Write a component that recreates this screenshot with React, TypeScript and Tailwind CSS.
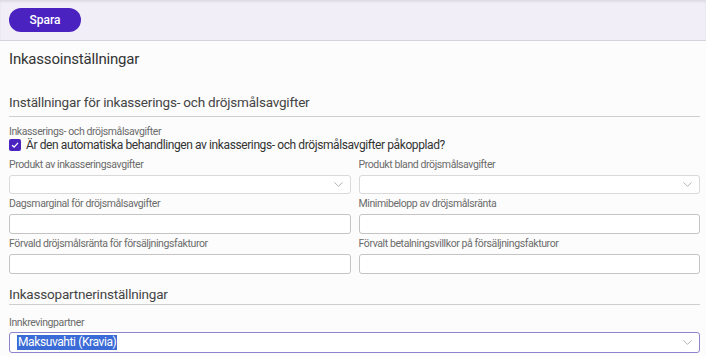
import { ChevronDown } from "lucide-react";

const font = { fontFamily: "Roboto, 'Noto Sans', sans-serif" };

function Label({ children }: { children: React.ReactNode }) {
  return (
    <p className="text-[10.5px] leading-[12px] tracking-[-0.4px] text-[#6b6b6b]">{children}</p>
  );
}

function TextField({ label }: { label: string }) {
  return (
    <div className="flex flex-col gap-[4px]">
      <Label>{label}</Label>
      <div className="h-[20px] rounded-[3px] border border-[#c4c4c4] bg-white" />
    </div>
  );
}

function SelectField({ label }: { label: string }) {
  return (
    <div className="flex flex-col gap-[4px]">
      <Label>{label}</Label>
      <div className="flex h-[19px] items-center justify-end rounded-[3px] border border-[#d9d9d9] bg-white pr-[4px]">
        <ChevronDown className="h-[15px] w-[15px] text-[#9a9a9a]" strokeWidth={1.2} />
      </div>
    </div>
  );
}

export default function App() {
  return (
    <div className="h-[356px] w-[706px] overflow-hidden bg-[#fcfcfc] text-[#333]" style={font}>
      <div className="flex h-[41px] items-center border-b border-[#d6d3dc] bg-[#f2eef8] px-[9px] shadow-[inset_0_2px_2px_rgba(0,0,0,0.08)]">
        <button
          type="button"
          className="h-[24px] w-[72px] rounded-full bg-[#4a22c0] text-[12px] font-medium text-white"
        >
          Spara
        </button>
      </div>

      <div className="pl-[9px] pr-[6px]">
        <h1 className="pt-[8px] text-[15px] leading-[20px] tracking-[-0.2px] text-[#333]">
          Inkassoinställningar
        </h1>

        <h2 className="mt-[24px] border-b border-[#cfcfcf] pb-[5px] text-[13.5px] leading-[18px] tracking-[-0.2px] text-[#444]">
          Inställningar för inkasserings- och dröjsmålsavgifter
        </h2>

        <div className="mt-[9px]">
          <Label>Inkasserings- och dröjsmålsavgifter</Label>
          <label className="flex items-center gap-[5px] text-[12px] leading-[14px] tracking-[-0.4px] text-[#333]">
            <span className="flex h-[12px] w-[12px] items-center justify-center rounded-[2px] bg-[#4a22c0]">
              <svg viewBox="0 0 12 12" className="h-[10px] w-[10px]" fill="none" stroke="white" strokeWidth="1.6">
                <path d="M2.5 6.2 5 8.5 9.6 3.4" />
              </svg>
            </span>
            Är den automatiska behandlingen av inkasserings- och dröjsmålsavgifter påkopplad?
          </label>
        </div>

        <div className="mt-[7px] grid grid-cols-2 gap-x-[8px] gap-y-[4px]">
          <SelectField label="Produkt av inkasseringsavgifter" />
          <SelectField label="Produkt bland dröjsmålsavgifter" />
          <TextField label="Dagsmarginal för dröjsmålsavgifter" />
          <TextField label="Minimibelopp av dröjsmålsränta" />
          <TextField label="Förvald dröjsmålsränta för försäljningsfakturor" />
          <TextField label="Förvalt betalningsvillkor på försäljningsfakturor" />
        </div>

        <h2 className="mt-[11px] border-b border-[#cfcfcf] pb-[1px] text-[13.5px] leading-[18px] tracking-[-0.2px] text-[#444]">
          Inkassopartnerinställningar
        </h2>

        <div className="mt-[12px] flex flex-col gap-[3px]">
          <Label>Innkrevingpartner</Label>
          <div className="flex h-[21px] items-center justify-between rounded-[3px] border border-[#8f84cc] bg-white pl-[7px] pr-[4px]">
            <span className="bg-[#3a6bd6] px-[1px] text-[12px] leading-[15px] tracking-[-0.4px] text-white">
              Maksuvahti (Kravia)
            </span>
            <ChevronDown className="h-[15px] w-[15px] text-[#9a9a9a]" strokeWidth={1.2} />
          </div>
        </div>
      </div>
    </div>
  );
}
